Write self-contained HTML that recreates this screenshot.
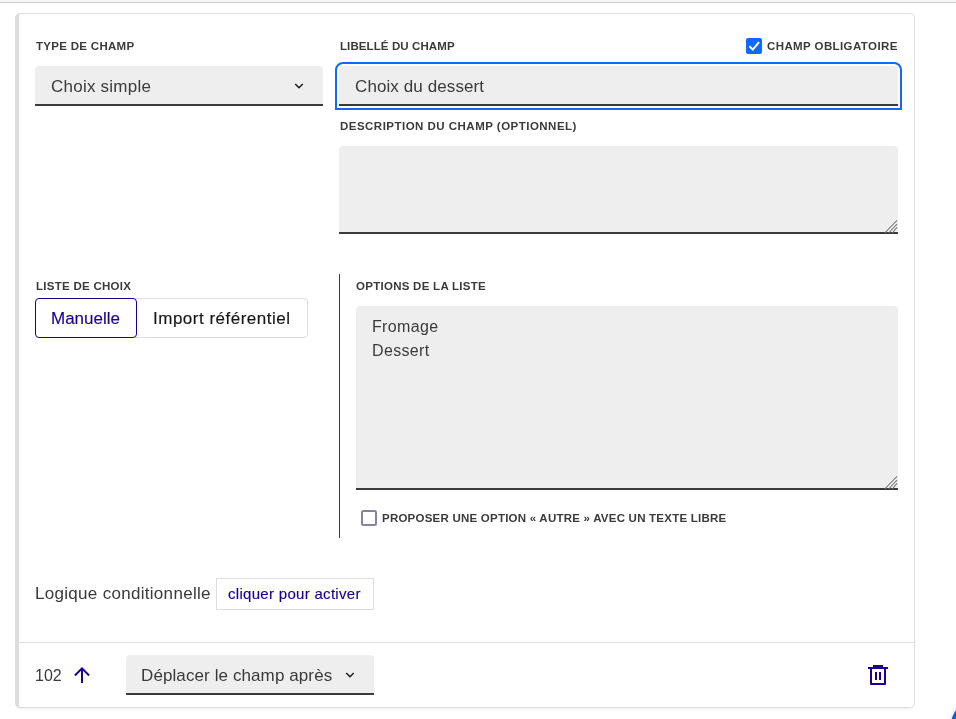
<!DOCTYPE html>
<html lang="fr">
<head>
<meta charset="utf-8">
<style>
*{box-sizing:border-box;margin:0;padding:0}
html,body{width:956px;height:719px;overflow:hidden;background:#fff}
body{position:relative;will-change:transform;font-family:"Liberation Sans",sans-serif;color:#3a3a3a}
.a{position:absolute;white-space:nowrap;line-height:1}
.topband{position:absolute;left:0;top:0;width:956px;height:2px;background:#f6f6f8}
.topline{position:absolute;left:0;top:2px;width:956px;height:1px;background:#cbcbcb}
.card{position:absolute;left:15px;top:13px;width:900px;height:695px;border:1px solid #dddddd;border-left:4px solid #dddddd;border-radius:5px;box-shadow:0 2px 3px -2px rgba(0,0,0,.14)}
.lbl{font-weight:bold;font-size:11.5px;text-transform:uppercase;color:#3a3a3a}
.txt{font-size:17px;color:#3a3a3a}
.field{position:absolute;background:#eeeeee;border-radius:4px 4px 0 0;box-shadow:inset 0 -2px 0 0 #3a3a3a}
.focus{outline:2px solid #1268fc;outline-offset:2px}
.vline{position:absolute;left:339px;top:274px;width:1px;height:264px;background:#3a3a3a}
.sep{position:absolute;left:19px;top:642px;width:895px;height:1px;background:#dddddd}
textarea{position:absolute;background:#eeeeee;border:0;border-radius:4px 4px 0 0;box-shadow:inset 0 -2px 0 0 #3a3a3a;resize:none;font-family:"Liberation Sans",sans-serif;font-size:16px;line-height:24px;letter-spacing:0.35px;color:#3a3a3a;padding:9px 16px;outline:none}
</style>
</head>
<body>
<div class="topband"></div>
<div class="topline"></div>
<div class="card"></div>

<!-- row 1 -->
<div class="a lbl" style="left:36px;top:41px;letter-spacing:0.3px">Type de champ</div>
<div class="field" style="left:35px;top:66px;width:288px;height:40px"></div>
<div class="a txt" style="left:51px;top:78px;letter-spacing:0.23px">Choix simple</div>
<svg class="a" style="left:291px;top:78px" width="16" height="16" viewBox="0 0 24 24"><path d="M12 13.172l4.95-4.95 1.414 1.414L12 16 5.636 9.636 7.05 8.222z" fill="#161616"/></svg>

<div class="a lbl" style="left:340px;top:41px;letter-spacing:0.1px">Libellé du champ</div>
<svg class="a" style="left:746px;top:38px" width="16" height="16" viewBox="0 0 16 16"><rect x="0" y="0" width="16" height="16" rx="2" fill="#1268fc"/><path d="M3.4 8.3 L6.8 11.6 L13 4.2" fill="none" stroke="#fff" stroke-width="2"/></svg>
<div class="a lbl" style="left:767px;top:41px;letter-spacing:0.4px">Champ obligatoire</div>
<div class="field focus" style="left:339px;top:66px;width:559px;height:40px"></div>
<div class="a txt" style="left:355px;top:78px;letter-spacing:0.1px">Choix du dessert</div>

<div class="a lbl" style="left:340px;top:121px;letter-spacing:0.48px">Description du champ (optionnel)</div>
<textarea style="left:339px;top:146px;width:559px;height:88px"></textarea>
<svg class="a" style="left:884px;top:219px" width="14" height="15" viewBox="0 0 14 15"><g stroke-linecap="round"><path d="M0.6 12.7 L12 1 M4.5 12.7 L12 4.6 M8.1 12.7 L12 8" stroke="#fff" stroke-width="1" opacity="0.9"/><path d="M1.3 13.4 L12.7 1.7 M5.2 13.4 L12.7 5.3 M8.8 13.4 L12.7 8.7" stroke="#7a7a7a" stroke-width="1.1"/></g></svg>

<!-- row 2 -->
<div class="a lbl" style="left:36px;top:281px;letter-spacing:0.27px">Liste de choix</div>
<div class="a" style="left:35px;top:298px;width:273px;height:40px;border:1px solid #dddddd;border-radius:4px"></div>
<div class="a" style="left:35px;top:298px;width:102px;height:40px;border:1px solid #1d0091;border-radius:4px;background:#fff"></div>
<div class="a txt" style="left:51px;top:310px;color:#1d0091;-webkit-text-stroke:0.15px #1d0091">Manuelle</div>
<div class="a txt" style="left:153px;top:310px;color:#161616;letter-spacing:0.5px;-webkit-text-stroke:0.15px #161616">Import référentiel</div>

<div class="vline"></div>
<div class="a lbl" style="left:356px;top:281px;letter-spacing:0.27px">Options de la liste</div>
<textarea style="left:356px;top:306px;width:542px;height:184px">Fromage
Dessert</textarea>
<svg class="a" style="left:884px;top:475px" width="14" height="15" viewBox="0 0 14 15"><g stroke-linecap="round"><path d="M0.6 12.7 L12 1 M4.5 12.7 L12 4.6 M8.1 12.7 L12 8" stroke="#fff" stroke-width="1" opacity="0.9"/><path d="M1.3 13.4 L12.7 1.7 M5.2 13.4 L12.7 5.3 M8.8 13.4 L12.7 8.7" stroke="#7a7a7a" stroke-width="1.1"/></g></svg>
<div class="a" style="left:361px;top:510px;width:16px;height:16px;border:2px solid #878398;border-radius:2.5px"></div>
<div class="a lbl" style="left:382px;top:513px;letter-spacing:0.23px">Proposer une option « autre » avec un texte libre</div>

<!-- row 3 -->
<div class="a txt" style="left:35px;top:585px;letter-spacing:0.3px">Logique conditionnelle</div>
<div class="a" style="left:216px;top:578px;width:158px;height:32px;border:1px solid #dddddd"></div>
<div class="a" style="left:228px;top:586px;font-size:15px;color:#1d0091;letter-spacing:0.3px;-webkit-text-stroke:0.15px #1d0091">cliquer pour activer</div>

<div class="sep"></div>
<div class="a txt" style="left:35px;top:668px;font-size:16px">102</div>
<svg class="a" style="left:70px;top:663px" width="24" height="24" viewBox="0 0 24 24"><path d="M13 7.828V20h-2V7.828l-5.364 5.364-1.414-1.414L12 4l7.778 7.778-1.414 1.414L13 7.828z" fill="#1d0091"/></svg>
<div class="field" style="left:126px;top:655px;width:248px;height:40px"></div>
<div class="a txt" style="left:141px;top:667px;letter-spacing:0.1px">Déplacer le champ après</div>
<svg class="a" style="left:342px;top:667px" width="16" height="16" viewBox="0 0 24 24"><path d="M12 13.172l4.95-4.95 1.414 1.414L12 16 5.636 9.636 7.05 8.222z" fill="#161616"/></svg>

<svg class="a" style="left:866px;top:663px" width="24" height="24" viewBox="0 0 24 24"><path d="M7 4V2h10v2h5v2h-2v15a1 1 0 0 1-1 1H5a1 1 0 0 1-1-1V6H2V4h5ZM6 6v14h12V6H6Zm3 3h2v8H9V9Zm4 0h2v8h-2V9Z" fill="#1d0091"/></svg>

<svg class="a" style="left:900px;top:660px" width="56" height="59" viewBox="900 660 56 59"><defs><filter id="sh" x="-50%" y="-50%" width="200%" height="200%"><feGaussianBlur stdDeviation="3"/></filter></defs><circle cx="975" cy="727" r="25" fill="#000" opacity="0.12" filter="url(#sh)"/><circle cx="975" cy="725" r="24" fill="#0c60dc"/></svg>
</body>
</html>
